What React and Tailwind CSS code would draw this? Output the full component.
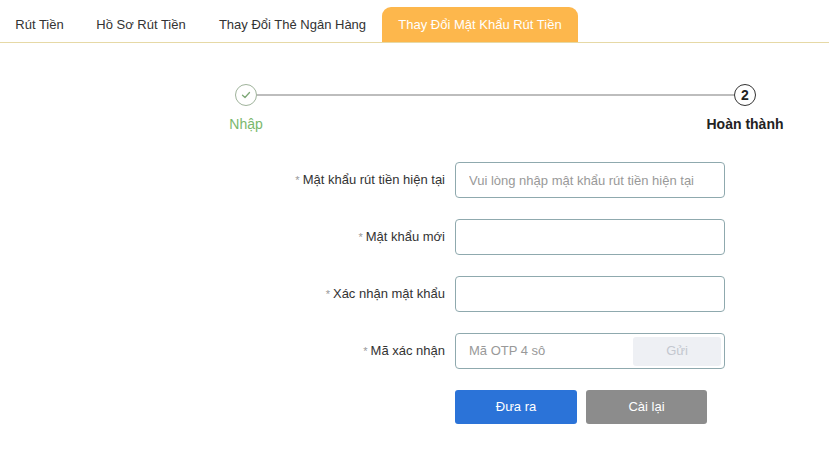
import React from "react";

const font = { fontFamily: '"Liberation Sans", Arial, sans-serif' };

function Tab({ label, w, active }) {
  return (
    <div
      className={
        "flex items-center justify-center text-[13px] " +
        (active
          ? "h-[35px] rounded-t-[9px] bg-[#fdb74c] text-white"
          : "h-[35px] text-[#333]")
      }
      style={{ width: w }}
    >
      {label}
    </div>
  );
}

function Row({ label, children }) {
  return (
    <div className="flex items-center h-[36px]">
      <div className="w-[210px] pr-[10px] text-right text-[13px] text-[#333]">
        <span className="text-[#999] text-[11px] mr-[3px]">*</span>
        {label}
      </div>
      {children}
    </div>
  );
}

function Input({ placeholder }) {
  return (
    <input
      className="w-[270px] h-[36px] rounded-[4px] border border-[#8fa9ae] px-[13px] text-[13px] text-[#333] placeholder:text-[#999] outline-none"
      placeholder={placeholder}
      style={font}
    />
  );
}

export default function App() {
  return (
    <div className="w-[829px] h-[452px] bg-white overflow-hidden" style={font}>
      <div className="flex items-end h-[43px] border-b border-[#e6d9a6]">
        <Tab label="Rút Tiền" w={79} />
        <Tab label="Hồ Sơ Rút Tiền" w={124} />
        <Tab label="Thay Đổi Thẻ Ngân Hàng" w={179} />
        <Tab label="Thay Đổi Mật Khẩu Rút Tiền" w={196} active />
      </div>

      <div className="ml-[235px] mt-[41px] w-[521px]">
        <div className="flex items-center">
          <div className="w-[22px] h-[22px] rounded-full border border-[#9fb39b] flex items-center justify-center">
            <svg width="12" height="12" viewBox="0 0 12 12" fill="none">
              <path d="M2.5 6.2 L5 8.5 L9.5 3.5" stroke="#7ea877" strokeWidth="1.3" strokeLinecap="round" strokeLinejoin="round" />
            </svg>
          </div>
          <div className="flex-1 h-[2px] bg-[#bdbdbd]" />
          <div className="w-[22px] h-[22px] rounded-full border border-[#333] flex items-center justify-center text-[14px] font-bold text-[#222]">
            2
          </div>
        </div>
        <div className="flex justify-between mt-[10px] h-[16px] items-center ml-[-17px] mr-[-34px]">
          <div className="w-[56px] text-center text-[14px] text-[#7ab86d]">Nhập</div>
          <div className="w-[90px] text-center text-[14px] font-bold text-[#222]">Hoàn thành</div>
        </div>
      </div>

      <div className="ml-[245px] mt-[30px] flex flex-col gap-[21px]">
        <Row label="Mật khẩu rút tiền hiện tại">
          <Input placeholder="Vui lòng nhập mật khẩu rút tiền hiện tại" />
        </Row>
        <Row label="Mật khẩu mới">
          <Input />
        </Row>
        <Row label="Xác nhận mật khẩu">
          <Input />
        </Row>
        <Row label="Mã xác nhận">
          <div className="w-[270px] h-[36px] rounded-[4px] border border-[#8fa9ae] flex items-center pl-[13px] pr-[3px]">
            <input
              className="flex-1 min-w-0 text-[13px] text-[#333] placeholder:text-[#999] outline-none"
              placeholder="Mã OTP 4 sô"
              style={font}
            />
            <div className="w-[88px] h-[29px] rounded-[3px] bg-[#eef0f4] text-[#c3c7cf] text-[13px] flex items-center justify-center">
              Gửi
            </div>
          </div>
        </Row>
        <div className="flex ml-[210px] gap-[9px]">
          <div className="w-[122px] h-[34px] rounded-[3px] bg-[#2b73d8] text-white text-[13px] flex items-center justify-center">
            Đưa ra
          </div>
          <div className="w-[121px] h-[34px] rounded-[3px] bg-[#8c8c8c] text-white text-[13px] flex items-center justify-center">
            Cài lại
          </div>
        </div>
      </div>
    </div>
  );
}
